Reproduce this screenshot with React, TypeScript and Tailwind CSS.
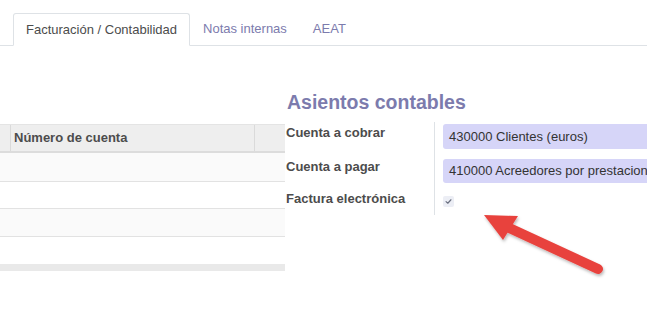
import React from "react";

export default function App() {
  const font = { fontFamily: '"Liberation Sans", Arial, sans-serif' };
  return (
    <div className="relative w-[647px] h-[333px] overflow-hidden bg-white text-[#4c4c4c]" style={font}>
      {/* Tabs */}
      <div className="flex items-end h-[46px] border-b border-[#dee2e6] pl-[13px]">
        <div className="h-[33px] -mb-px px-[12px] flex items-center border border-[#dee2e6] border-b-white bg-white rounded-t-[3px] text-[13px] text-[#4c4c4c]">
          Facturación / Contabilidad
        </div>
        <div className="h-[33px] px-[13px] flex items-center text-[13px] text-[#7c7bad]">Notas internas</div>
        <div className="h-[33px] px-[13px] flex items-center text-[13px] text-[#7c7bad]">AEAT</div>
      </div>

      <div className="flex">
        {/* Left table */}
        <div className="w-[285px] pt-[78px] shrink-0">
          <div className="flex h-[29px] bg-[#eeeeee] border-b-2 border-[#dcdcdc] border-t border-t-[#e4e4e4]">
            <div className="w-[11px] border-r border-[#dadada]" />
            <div className="flex-1 flex items-center pl-[3px] text-[13px] font-bold text-[#4c4c4c]">Número de cuenta</div>
            <div className="w-[31px] border-l border-[#dadada]" />
          </div>
          <div className="h-[29px] bg-[#fafafa] border-b border-[#e2e2e2]" />
          <div className="h-[27px] bg-white border-b border-[#e2e2e2]" />
          <div className="h-[28px] bg-[#fafafa] border-b border-[#e2e2e2]" />
          <div className="h-[27px] bg-white" />
          <div className="h-[7px] bg-[#e9e9e9]" />
        </div>

        {/* Right group */}
        <div className="flex-1 pl-[1px] pt-[44px]">
          <div className="text-[19.5px] font-bold text-[#7c7bad] leading-[24px] pl-[1px]">Asientos contables</div>
          <div className="mt-[8px] flex">
            <div className="w-[149px] border-r border-[#dee2e6] flex flex-col text-[13px] font-bold text-[#4c4c4c] pb-[2px]">
              <div className="h-[34px] pt-[1px]">Cuenta a cobrar</div>
              <div className="h-[33px] pt-[1px]">Cuenta a pagar</div>
              <div className="h-[24px]">Factura electrónica</div>
            </div>
            <div className="flex-1 pl-[8px] flex flex-col">
              <div className="mt-[2px] h-[25px] bg-[#d6d5f8] rounded-l-[3px] flex items-center pl-[6px] text-[13px] text-[#333333] whitespace-nowrap">
                430000 Clientes (euros)
              </div>
              <div className="mt-[10px] h-[24px] bg-[#d6d5f8] rounded-l-[3px] flex items-center pl-[6px] text-[13px] text-[#333333] whitespace-nowrap overflow-hidden">
                410000 Acreedores por prestaciones
              </div>
              <div className="mt-[13px] w-[11px] h-[11px] rounded-[2px] bg-[#eceef5] flex items-center justify-center">
                <svg width="7" height="7" viewBox="0 0 8 8">
                  <path d="M1.2 4.2 L3.2 6 L6.8 2" fill="none" stroke="#6b7080" strokeWidth="1.3" strokeLinecap="round" strokeLinejoin="round" />
                </svg>
              </div>
            </div>
          </div>
        </div>
      </div>

      {/* Annotation arrow */}
      <svg className="absolute left-0 top-0 pointer-events-none" width="647" height="333" viewBox="0 0 647 333">
        <defs>
          <filter id="sh" x="-20%" y="-20%" width="140%" height="140%">
            <feDropShadow dx="1" dy="2" stdDeviation="1.5" floodColor="#000" floodOpacity="0.28" />
          </filter>
        </defs>
        <g filter="url(#sh)">
          <line x1="598" y1="269" x2="505" y2="226" stroke="#e8433e" strokeWidth="10" strokeLinecap="round" />
          <polygon points="484,215 518,216 503,240" fill="#e8433e" />
        </g>
      </svg>
    </div>
  );
}
